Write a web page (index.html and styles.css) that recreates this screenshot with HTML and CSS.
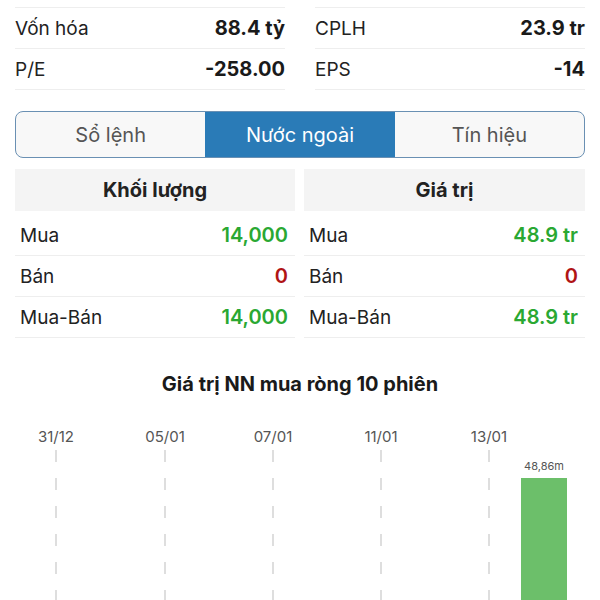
FILE: index.html
```html
<!DOCTYPE html>
<html lang="vi">
<head>
    <meta charset="UTF-8" />
    <meta name="viewport" content="width=device-width, initial-scale=1.0"/>
    <title>Nước ngoài</title>
    <link rel="stylesheet" href="styles.css">
</head>
<body>
<main>
    <section class="stats">
        <div class="stats-col">
            <div class="stat-row"><span>Vốn hóa</span><b>88.4 tỷ</b></div>
            <div class="stat-row"><span>P/E</span><b>-258.00</b></div>
        </div>
        <div class="stats-col">
            <div class="stat-row"><span>CPLH</span><b>23.9 tr</b></div>
            <div class="stat-row"><span>EPS</span><b>-14</b></div>
        </div>
    </section>

    <nav class="tabs">
        <a href="#">Sổ lệnh</a>
        <a href="#" class="active">Nước ngoài</a>
        <a href="#">Tín hiệu</a>
    </nav>

    <section class="foreign">
        <div class="ftable">
            <div class="ftable-head">Khối lượng</div>
            <div class="frow"><span>Mua</span><b class="up">14,000</b></div>
            <div class="frow"><span>Bán</span><b class="down">0</b></div>
            <div class="frow"><span>Mua-Bán</span><b class="up">14,000</b></div>
        </div>
        <div class="ftable">
            <div class="ftable-head">Giá trị</div>
            <div class="frow"><span>Mua</span><b class="up">48.9 tr</b></div>
            <div class="frow"><span>Bán</span><b class="down">0</b></div>
            <div class="frow"><span>Mua-Bán</span><b class="up">48.9 tr</b></div>
        </div>
    </section>

    <h3 class="chart-title">Giá trị NN mua ròng 10 phiên</h3>
    <svg class="chart" width="570" height="200" viewBox="0 0 570 200">
        <g class="dates">
            <text x="41" y="42">31/12</text>
            <text x="150" y="42">05/01</text>
            <text x="258" y="42">07/01</text>
            <text x="366" y="42">11/01</text>
            <text x="474" y="42">13/01</text>
        </g>
        <g class="grid">
            <line x1="41" y1="50" x2="41" y2="200"/>
            <line x1="150" y1="50" x2="150" y2="200"/>
            <line x1="258" y1="50" x2="258" y2="200"/>
            <line x1="366" y1="50" x2="366" y2="200"/>
            <line x1="474" y1="50" x2="474" y2="200"/>
        </g>
        <text class="bar-label" x="529" y="70">48,86m</text>
        <rect class="bar" x="506" y="78" width="46" height="122"/>
    </svg>
</main>
</body>
</html>
```

FILE: styles.css
```css
body {
    font-family: Inter, 'Liberation Sans', Arial, sans-serif;
    margin: 0;
    padding: 0;
    background-color: #fff;
    color: #222;
    overflow: hidden;
}

main {
    padding: 7px 15px 0;
}

.stats {
    display: grid;
    grid-template-columns: 1fr 1fr;
    gap: 30px;
}

.stat-row {
    display: flex;
    justify-content: space-between;
    align-items: center;
    height: 40px;
    border-bottom: 1px solid #eeeeee;
    font-size: 19px;
}

.stat-row:first-child {
    border-top: 1px solid #eeeeee;
}

.stat-row b {
    color: #1a1a1a;
    font-size: 20px;
    font-weight: 700;
}

.tabs {
    display: flex;
    margin-top: 21px;
    height: 45px;
    border: 1.5px solid #6a90b3;
    border-radius: 8px;
    overflow: hidden;
    background: #f8f8f8;
}

.tabs a {
    flex: 1;
    display: flex;
    align-items: center;
    justify-content: center;
    color: #555;
    text-decoration: none;
    font-size: 20px;
}

.tabs a.active {
    background-color: #2a7bb7;
    color: #fff;
}

.foreign {
    display: grid;
    grid-template-columns: 280px 281px;
    gap: 9px;
    margin-top: 11px;
}

.ftable-head {
    height: 42px;
    background: #f4f4f4;
    display: flex;
    align-items: center;
    justify-content: center;
    font-weight: 700;
    font-size: 20px;
    margin-bottom: 4px;
}

.frow {
    display: flex;
    justify-content: space-between;
    align-items: center;
    height: 40px;
    padding: 0 7px 0 5px;
    border-bottom: 1px solid #eeeeee;
    font-size: 19px;
}

.frow b {
    font-size: 20px;
    font-weight: 600;
}

.up {
    color: #2aa832;
}

.down {
    color: #b01414;
}

.chart-title {
    margin: 34px 0 0;
    text-align: center;
    font-size: 20px;
    font-weight: 700;
    line-height: 24px;
    color: #1a1a1a;
}

.chart {
    display: block;
    margin-top: 4px;
}

.dates text {
    font-size: 15px;
    fill: #555;
    text-anchor: middle;
}

.grid line {
    stroke: #bdbdbd;
    stroke-width: 1;
    stroke-dasharray: 12 16;
}

.bar-label {
    font-size: 11px;
    fill: #555;
    text-anchor: middle;
}

.bar {
    fill: #6cbf6a;
}
```
